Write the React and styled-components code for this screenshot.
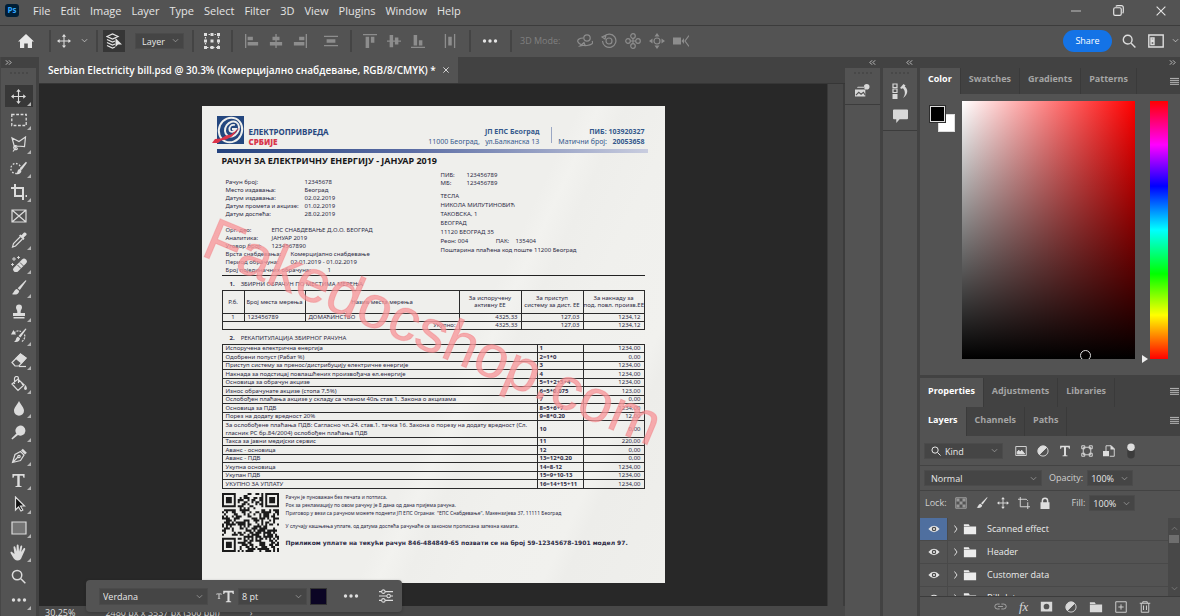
import React from "react";
import styled, { createGlobalStyle, css } from "styled-components";

const Global = createGlobalStyle`
  *, *::before, *::after { box-sizing: border-box; }
  html, body, #root { height: 100%; }
  body { margin: 0; overflow: hidden; background: #535353; color: #e4e4e4;
    font: 11px/16px "Open Sans", "Noto Sans", sans-serif; }
  button, input, select { font: inherit; color: inherit; border: 0; padding: 0; margin: 0; background: none; border-radius: 0; }
  select { appearance: none; }
  ul { list-style: none; margin: 0; padding: 0; }
  h1, h2, p, dl, dd, dt { margin: 0; font: inherit; }
  svg { display: block; flex: none; }
`;

const Shell = styled.div`
  display: flex; flex-direction: column; height: 100vh; min-height: 0;
`;
const MenuBar = styled.header`
  display: flex; align-items: center; height: 26px; flex: none; padding: 0 14px 4px 5px;
  border-bottom: 1px solid #3c3c3c;
`;
const Logo = styled.span`
  width: 14px; height: 13px; border-radius: 3px; background: #001e36; color: #31a8ff;
  font-size: 8px; line-height: 12px; font-weight: 700; text-align: center; margin-right: 14px;
`;
const Menus = styled.nav`display: flex; gap: 10px; flex: 1;`;
const WindowButtons = styled.div`display: flex; gap: 32px; align-items: center;`;
const Plain = styled.button`display: flex; align-items: center; justify-content: center; white-space: nowrap;`;

const OptionsBar = styled.div`
  display: flex; align-items: center; height: 31px; flex: none; padding: 0 1px 2px 18px;
`;
const Rule = styled.i`width: 2px; height: 22px; background: #444; flex: none; margin: 0 ${p => p.$r ?? 0}px 0 ${p => p.$l ?? 0}px;`;
const Group = styled.div`display: flex; align-items: center; gap: ${p => p.$gap}px; color: ${p => p.$dim ? "#8d8d8d" : "#dedede"};`;
const AutoSelect = styled(Plain)`width: 22px; height: 22px; background: #363636;`;
const ModeLabel = styled.span`font-size: 9px; color: #808080; margin: 0 17px 0 8px;`;
const Spacer = styled.div`flex: 1;`;
const Share = styled.button`
  width: 49px; height: 22px; border-radius: 11px; background: #1473e6; color: #fff; font-size: 9px; margin-right: 10px;
`;

const Field = styled.label`
  display: flex; align-items: center; position: relative; height: ${p => p.$h ?? 16}px; width: ${p => p.$w}px;
  background: #454545; border: 1px solid #4b4b4b; color: #e8e8e8; font-size: 9px; flex: none;
  padding-left: ${p => p.$pad ?? 6}px; gap: 4px;
  select, input { flex: 1; min-width: 0; width: 0; height: 100%; outline: 0; }
  > svg:last-child { margin-right: 4px; color: #aaa; pointer-events: none; }
`;

const Main = styled.div`display: flex; flex: 1; min-height: 0;`;
const ToolColumn = styled.aside`
  width: 39px; flex: none; border-right: 3px solid #424242; border-left: 1px solid #474747; display: flex; flex-direction: column;
`;
const Strip = styled.div`
  height: 11px; flex: none; background: #424242; display: flex; align-items: center; color: #d0d0d0;
  justify-content: ${p => p.$end ? "flex-end" : "flex-start"}; padding: 0 4px;
`;
const Grip = styled.i`height: 2px; width: 18px; margin: 4px auto 10px; border-top: 2px dotted #484848; flex: none;`;
const ToolList = styled.div`display: flex; flex-direction: column; align-items: center;`;
const Tool = styled.button`
  position: relative; width: 28px; height: 22px; margin: 1px 0; display: grid; place-items: center; color: #dcdcdc;
  background: ${p => p.$on ? "#383838" : "transparent"};
  ${p => p.$more && css`&::after { content: ""; position: absolute; right: 2px; bottom: 1px; border: 2px solid transparent; border-right-color: #b4b4b4; border-bottom-color: #b4b4b4; }`}
`;

const Workspace = styled.main`flex: 1; min-width: 0; display: flex; flex-direction: column; position: relative; background: #282828;`;
const DocTabs = styled.div`height: 27px; flex: none; background: #424242; display: flex; border-bottom: 1px solid #363636;`;
const DocTab = styled.div`
  display: flex; align-items: center; gap: 7px; background: #535353; padding: 0 9px; font-weight: 600; font-size: 10px; color: #fff; white-space: nowrap;
`;
const View = styled.div`flex: 1; min-height: 0; display: flex;`;
const Canvas = styled.div`flex: 1; overflow: hidden; display: flex; justify-content: center; align-items: flex-start; padding-top: 22px;`;
const VScroll = styled.div`width: 18px; background: #484848; border-left: 1px solid #393939; border-right: 2px solid #3c3c3c;`;
const Status = styled.footer`
  height: 10px; flex: none; overflow: hidden; background: #484848; padding-left: 6px; display: flex; gap: 30px; font-size: 9px; color: #dcdcdc; line-height: 14px; white-space: nowrap;
`;

const FloatBar = styled.div`
  position: absolute; left: 47px; bottom: 4px; width: 316px; height: 32px; border-radius: 4px; background: #535353;
  display: flex; align-items: center; padding: 0 10px 0 4px; box-shadow: 0 1px 3px #2226;
`;
const Handle = styled.i`width: 4px; height: 25px; border-radius: 2px; background: #cfcfcf; margin-right: 9px;`;
const Swatch = styled.button`width: 17px; height: 17px; background: #0b0524; border: 1px solid #333; margin: 0 16px 0 3px; flex: none;`;

/* Document page */
const Page = styled.article`
  position: relative; width: 463px; height: 477px; flex: none; overflow: hidden; color: #2c2a45;
  background: linear-gradient(115deg, #efefec 0 55%, #f2f2ef 58%, #eeeeeb 62%, #f0f0ed 70%, #f1f1ee 82%, #ededea 85%, #efefec 100%);
  font: 6px/8px "Noto Sans", sans-serif; padding: 9px 20px 0; white-space: nowrap;
`;
const PageHead = styled.header`display: flex; height: 34px; margin-left: -10px;`;
const Company = styled.div`
  color: #27477e; font: 700 8px/10px "Noto Sans", sans-serif; padding: 12px 0 0 3px; flex: 1;
  b { display: block; color: #d9364b; }
`;
const HeadText = styled.div`
  color: #35598c; font-size: 7px; line-height: 10px; text-align: right; padding-top: 12px;
  height: 30px;
`;
const HeadRule = styled.i`width: 1px; height: 16px; margin: 12px 6px 0 12px; background: #9aa7c4;`;
const Band = styled.i`display: block; height: 4px; margin: 0 -3px 0 -5px; background: linear-gradient(90deg, #24427e, #5a6ca4 45%, #c9cddf);`;
const Title = styled.h1`font: 700 9px/12px "Noto Sans", sans-serif; color: #17171a; margin-top: 2px;`;
const Columns = styled.div`display: flex; height: 109px; border-bottom: 1px solid #222;`;
const Left = styled.div`width: 219px; padding: 11px 0 0 4px;`;
const Right = styled.div`padding-top: 4px; flex: 1;`;
const Pairs = styled.dl`
  display: grid; grid-template-columns: ${p => p.$w}px auto; justify-content: start; margin-bottom: ${p => p.$mb ?? 0}px;
`;
const Address = styled.p`line-height: 9px; margin-top: 5px; span { display: inline-block; margin-left: 26px; }`;
const Section = styled.h2`margin-left: 8px; b { margin-right: 6px; } height: 8px; margin-top: 4px;`;
const Bill = styled.table`
  width: 422px; table-layout: fixed; border-collapse: collapse; margin-top: 2px; font-size: 6px; line-height: 7px;
  th, td { border: 1px solid #2b2b2b; padding: 0 3px; overflow: hidden; font-weight: 400; text-align: left; vertical-align: middle; }
  td:last-child, td.n { text-align: right; }
  thead th { height: 23px; text-align: center; padding: 0; }
  td.c { text-align: center; }
`;
const Recap = styled(Bill)`
  tbody tr:nth-child(odd) td { line-height: 7px; }
  tbody tr:nth-child(even) td { line-height: 8px; }
  td:nth-child(2) { font-weight: 700; padding-left: 2px; }
  td { padding-left: 3px; }
`;
const Foot = styled.div`display: flex; gap: 7px; margin-top: 4px; font-size: 5px;`;
const Notes = styled.div`
  p:nth-child(3) { margin-bottom: 5px; }
  p:nth-child(4) { margin-bottom: 9px; }
  p:last-child { font: 700 6px/8px "DejaVu Sans", sans-serif; }
`;
const Watermark = styled.div`
  position: absolute; left: 50%; top: 226px; transform: translate(-50%, -50%) rotate(23deg);
  font: 60px/60px "Liberation Sans", Arial, sans-serif; color: rgba(240, 60, 66, .42);
  -webkit-text-stroke: 1px rgba(236, 80, 84, .2);
  text-shadow: 0 0 2px rgba(255, 255, 255, .7); pointer-events: none;
`;

/* Side panels */
const Dock = styled.aside`width: ${p => p.$w}px; flex: none; border-right: 3px solid #424242; display: flex; flex-direction: column;`;
const DockGroup = styled.div`
  display: flex; flex-direction: column; align-items: center; gap: 9px; height: ${p => p.$h}px; border-bottom: 1px solid #3c3c3c; color: #d8d8d8;
  i { margin-bottom: 0; }
`;
const Panels = styled.aside`width: 260px; flex: none; display: flex; flex-direction: column; min-height: 0;`;
const Tabs = styled.div`
  display: flex; flex: none; height: ${p => p.$h ?? 26}px; background: #424242; align-items: stretch; padding-right: 1px;
  > svg { margin: 9px 0 0 auto; color: #c4c4c4; }
`;
const Tab = styled.button`
  font-size: 9px; font-weight: 700; padding: 0 8px 4px; border-right: 1px solid #3a3a3a; white-space: nowrap;
  color: ${p => p.$on ? "#fff" : "#a5a5a5"}; background: ${p => p.$on ? "#535353" : "transparent"};
`;
const ColorBody = styled.div`display: flex; height: 284px; flex: none; padding: 7px 12px 16px 9px; border-bottom: 3px solid #424242;`;
const Chips = styled.div`
  display: grid; width: 33px; grid-template: 9px 9px 9px / 9px 8px 9px; padding-top: 4px;
  i { border: 1px solid #2d2d2d; }
  i:first-child { grid-area: 2 / 2 / 4 / 4; background: #fff; border-color: #ddd; }
  i:last-child { grid-area: 1 / 1 / 3 / 3; background: #000; box-shadow: inset 0 0 0 1px #ddd; }
`;
const Spectrum = styled.div`
  flex: 1; background: linear-gradient(0deg, #000, transparent), linear-gradient(90deg, #fff, #f00); position: relative; overflow: hidden;
  &::after { content: ""; position: absolute; left: 118px; bottom: -2px; width: 11px; height: 11px; border: 1px solid #ddd; border-radius: 50%; }
`;
const Hue = styled.div`
  width: 18px; margin-left: 15px; position: relative;
  background: linear-gradient(#f00, #f0f 17%, #00f 33%, #0ff 50%, #0f0 67%, #ff0 83%, #f00);
  &::before { content: ""; position: absolute; left: -8px; bottom: -4px; border: 4px solid transparent; border-left: 6px solid #eee; border-right: 0; }
`;
const Row = styled.div`
  display: flex; align-items: center; flex: none; height: ${p => p.$h}px; padding: 0 5px ${p => p.$pb ?? 0}px 4px; font-size: 9px; color: #d0d0d0;
  border-bottom: ${p => p.$line ? "1px solid #434343" : "0"}; white-space: nowrap;
`;
const Text = styled.span`margin: 0 ${p => p.$r ?? 4}px 0 ${p => p.$l ?? 0}px;`;
const Layers = styled.div`display: flex; flex: 1; min-height: 0; overflow: hidden; border-bottom: 1px solid #3c3c3c;`;
const LayerList = styled.ul`flex: 1;`;
const LayerRow = styled.li`
  display: flex; align-items: center; height: 23px; border-bottom: 1px solid #494949; font-size: 9px; color: #ececec;
`;
const Eye = styled.button`
  width: 28px; height: 100%; display: grid; place-items: center; border-right: 1px solid #494949; background: ${p => p.$on ? "#4f6f9f" : "transparent"};
`;
const LayerScroll = styled.div`
  width: 12px; background: #484848; display: flex; flex-direction: column; align-items: center; color: #888; padding: 7px 0 4px;
  i { width: 10px; height: 8px; background: #6e6e6e; margin: 3px 0 auto; }
`;
const PanelFoot = styled.footer`height: 19px; flex: none; display: flex; align-items: center; padding-left: 74px; gap: 12px; color: #d8d8d8;`;
const Fx = styled.i`font: italic 13px/14px "Liberation Serif", serif;`;

/* Icons: 16-unit drawings */
const I = ({ s = 16, w = 16, h = 16, sw = 1.2, fill = "none", children }) => (
  <svg width={s * w / 16} height={s * h / 16} viewBox={`0 0 ${w} ${h}`} fill={fill} stroke={fill === "none" ? "currentColor" : "none"} strokeWidth={sw} aria-hidden="true">{children}</svg>
);
const Move = ({ s = 15 }) => <I s={s}><path d="M8 1.5v13M1.5 8h13" /><path d="M8 0l2.4 3H5.6zM8 16l2.4-3H5.6zM0 8l3-2.4v4.8zM16 8l-3-2.4v4.8z" fill="currentColor" stroke="none" /></I>;
const Chev = ({ up }) => <I s={7} sw={1.6}><path d={up ? "M2 11l6-6 6 6" : "M2 5l6 6 6-6"} /></I>;
const Dots = () => <I fill="currentColor"><circle cx="2.5" cy="8" r="1.7" /><circle cx="8" cy="8" r="1.7" /><circle cx="13.5" cy="8" r="1.7" /></I>;
const Burger = () => <I s={9} sw={1.6}><path d="M0 2.5h16M0 6h16M0 9.5h16M0 13h16" /></I>;
const Double = ({ left }) => <I s={7} sw={2}><path d={left ? "M7 3L2 8l5 5M14 3L9 8l5 5" : "M2 3l5 5-5 5M9 3l5 5-5 5"} /></I>;
const Search = ({ s = 14 }) => <I s={s} sw={1.6}><circle cx="6.5" cy="6.5" r="5" /><path d="M10.5 10.5l4.8 4.8" /></I>;
const Folder = () => <I s={14} fill="currentColor"><path d="M1 2.5h5.5l1.2 2H1zM1 5h14v9H1z" /></I>;
const EyeIcon = () => <I s={12}><path d="M.5 8Q8-.5 15.5 8 8 16.5.5 8z" fill="#e6e6e6" stroke="none" /><circle cx="8" cy="8" r="3" fill="#4a4a4a" stroke="none" /><circle cx="8" cy="8" r="1.3" fill="#eee" stroke="none" /></I>;
const Half = () => <I s={12}><circle cx="8" cy="8" r="6.8" /><path d="M12.8 3.2A6.8 6.8 0 0 0 3.200 12.800z" fill="currentColor" /></I>;
const TypeT = ({ s = 13 }) => <I s={s} fill="currentColor"><path d="M1.5 1h13v4h-1.200l-.8-2H9.300v10.500l2 .5v1H4.700v-1l2-.5V3H3.500l-.8 2H1.500z" /></I>;
const Brush = ({ s = 16 }) => <I s={s} fill="currentColor"><path d="M15.500.8L8.800 10 6.700 8.200 14.600.2zM6 9l2.200 1.900C8 14.200 4 15.500.8 14 3 13.500 2.800 9.500 6 9z" /></I>;
const Align = ({ d }) => <I s={14} fill="currentColor"><path d={d} /></I>;

const tools = [
  ["Move", <Move />],
  ["Rectangular marquee", <I sw={1.3}><path d="M.8 2.500h14.400v11H.8z" strokeDasharray="2.800 1.600" /></I>],
  ["Polygonal lasso", <I><path d="M3.500 11L1 2l7 3.500L14.500 1l-1 9.500L6 10zM6 10a2 2 0 1 0-1 3.500c2 .5 1.500-2 0-2L2 15.500" /></I>],
  ["Quick selection", <I s={17}><circle cx="5.500" cy="8" r="4.700" strokeDasharray="1.600 1.500" /><path d="M16 2.500l-5 6.800-1.700-1.500L15 1.700zM9 8.500l1.800 1.700C10.500 13 8 14 5.500 13.200 7.500 12.500 6.500 9 9 8.500z" fill="currentColor" stroke="none" /></I>],
  ["Crop", <I sw={2}><path d="M4 0v12h9M0 4h12v12M14.500 12H16" /></I>],
  ["Frame", <I><path d="M1 2h14v12H1zM1 2l14 12M15 2L1 14" /></I>],
  ["Eyedropper", <I><path d="M9.500 4.500l-7 7L1.500 15l3-1 7-7" /><path d="M8 3.500l1.500-1 1 .8 2.300-2.500c1.500-1.300 3.800 1 2.400 2.500l-2.500 2.300.8 1-1 1.400z" fill="currentColor" stroke="none" /></I>],
  ["Spot healing brush", <I><path d="M5 13.500L13 5.500" strokeWidth="5.500" strokeLinecap="round" /><path d="M6.500 9l3.500 3.500M9 6.500l3.500 3.500" stroke="#535353" strokeWidth=".9" /><path d="M3 1v4M1 3h4M7.500 0v3M6 1.500h3M1.500 7v3M0 8.500h3" strokeWidth=".9" /></I>],
  ["Brush", <Brush />],
  ["Clone stamp", <I fill="currentColor"><path d="M5 3.500a3 3 0 0 1 6 0c0 1.800-1.600 2.300-1.300 5.500H14v3H2V9h4.300C6.600 5.800 5 5.300 5 3.500zM2.500 13h11v1.600h-11z" /></I>],
  ["History brush", <I><path d="M15.500 1l-6 8.500-2-1.500L14.500.5zM7 8.700l2 1.600c0 3-3 4.400-6 3.400 2.500-.8 1.500-4.500 4-5z" fill="currentColor" stroke="none" /><path d="M3 5c2-2.500 5-2.500 7-1.500M13.500 6.500c1 3-.5 6-3.500 7.500" strokeDasharray="2 1" /><path d="M0 6.500L2.500 2l2.500 4.500z" fill="currentColor" stroke="none" /></I>],
  ["Eraser", <I><path d="M1 10.500L9.500 2 15 6l-7 8H4z" /><path d="M5 6.500L9.500 2 15 6l-4.500 5z" fill="currentColor" /><path d="M8 14.500h7" /></I>],
  ["Paint bucket", <I><path d="M1 8l6-5 6 6-6 5.500zM3.500 8V2.500a2 2 0 0 1 4 0V7" /><path d="M14.500 9c2 3 1.800 5 0 5s-2-2 0-5zM10 5.500l4 3.500H11z" fill="currentColor" stroke="none" /></I>],
  ["Blur", <I fill="currentColor"><path d="M8 1c2 4 5 6.500 5 9.700a5 5 0 0 1-10 0C3 7.500 6 5 8 1z" /></I>],
  ["Dodge", <I fill="currentColor"><path d="M1.300 15.500l-.9-.9 5-5A5 5 0 1 1 7 11z" /></I>],
  ["Pen", <I><path d="M1.500 14.500L4 6.500l5.500-3L13 7l-3.500 5.500zM1.500 14.500L7 9" /><path d="M10 2.500L11.800.8l4 4L14 6.500z" fill="currentColor" stroke="none" /><circle cx="8" cy="8.500" r="1.200" /></I>],
  ["Type", <TypeT s={15} />],
  ["Path selection", <I><path d="M4.500 1v13l3-3 2.500 4 1.800-1-2.300-4h4z" fill="#111" /></I>],
  ["Rectangle", <I><path d="M1 2h14v12H1z" fill="#757575" /></I>],
  ["Hand", <I s={17} fill="currentColor"><path d="M4.200 9.500L3.300 3c0-1.300 1.500-1.300 1.800 0l1 4L6.300 1.500c.1-1.300 1.700-1.200 1.800 0L8.500 7l1.300-5c.4-1.100 1.900-.8 1.700.4l-1 5.200 2.200-3.300c.8-1 2.100-.2 1.500 1l-3 6.700c-.6 2-1.700 3.500-4.200 3.500-2 0-3.300-1.200-4.200-3L.5 8.500C.2 7.400 1.500 7 2.200 7.800z" /></I>],
  ["Zoom", <Search s={15} />],
  ["More tools", <Dots />],
];

const alignIcons = [
  "M0 0h1.500v16H0zM3 3h6v4H3zM3 9h12v4H3z",
  "M7.300 0h1.500v16H7.300zM4 3h8v4H4zM1 9h14v4H1z",
  "M14.500 0H16v16h-1.500zM7 3h6v4H7zM1 9h12v4H1z",
];
const alignIcons2 = [
  "M0 0h16v1.500H0zM3 3h4v13H3zM9 3h4v7H9z",
  "M0 7.300h16v1.500H0zM3 1h4v14H3zM9 4h4v8H9z",
  "M0 14.500h16V16H0zM3 1h4v12H3zM9 7h4v6H9z",
];

const recap = [
  ["Испоручена електрична енергија", "1", "1234,00"],
  ["Одобрени попуст (Рабат  %)", "2=1*0", "0,00"],
  ["Приступ систему за пренос/дистрибуцију електричне енергије", "3", "1234,00"],
  ["Накнада за подстицај повлашћених произвођача ел.енергије", "4", "1234,00"],
  ["Основица за обрачун акцизе", "5=1+2+3+4", "1234,00"],
  ["Износ обрачунате акцизе (стопа 7,5%)", "6=5*0.075", "123,00"],
  ["Ослобођен плаћања акцизе у складу са чланом 40љ став 1. Закона о акцизама", "7", "0,00"],
  ["Основица за ПДВ", "8=5+6+7", "1234,00"],
  ["Порез на додату вредност 20%", "9=8*0.20", "12,00"],
  [<>За ослобођене плаћања ПДВ: Сагласно чл.24. став.1. тачка 16. Закона о порезу на додату вредност (Сл.<br />гласник РС бр.84/2004) ослобођен плаћања ПДВ</>, "10", "0,00"],
  ["Такса за јавни медијски сервис", "11", "220,00"],
  ["Аванс - основица", "12", "0,00"],
  ["Аванс - ПДВ", "13=12*0.20", "0,00"],
  ["Укупна основица", "14=8-12", "1234,00"],
  ["Укупан ПДВ", "15=9+10-13", "1234,00"],
  ["УКУПНО ЗА УПЛАТУ", "16=14+15+11", "1234,00"],
];

/* Decorative code block: three corner marks and a scattered fill */
function CodeBlock() {
  const n = 29;
  const cells = [];
  const inCorner = (x, y) => (x < 8 && y < 8) || (x > n - 9 && y < 8) || (x < 8 && y > n - 9);
  let seed = 77;
  for (let y = 0; y < n; y++) for (let x = 0; x < n; x++) {
    seed = (seed * 1103515245 + 12345) % 2147483648;
    if (!inCorner(x, y) && (seed >> 12) % 100 < 52) cells.push(`M${x} ${y}h1v1h-1z`);
  }
  const mark = (x, y) => `M${x} ${y}h7v7h-7zM${x + 1} ${y + 1}v5h5v-5zM${x + 2} ${y + 2}h3v3h-3z`;
  return (
    <svg width="57" height="59" viewBox="0 0 29 29" preserveAspectRatio="none" fill="#1b1b1b" aria-hidden="true">
      <path d={cells.join("")} />
      <path fillRule="evenodd" d={mark(0, 0) + mark(22, 0) + mark(0, 22)} />
    </svg>
  );
}

function CompanyLogo() {
  return (
    <svg width="34" height="32" viewBox="0 0 34 32" aria-hidden="true">
      <rect x="5" y="1" width="27" height="28" fill="#24477f" />
      <ellipse cx="18.500" cy="15" rx="11.500" ry="12.500" fill="none" stroke="#efefec" strokeWidth="2" transform="rotate(25 18.500 15)" />
      <ellipse cx="20" cy="14" rx="6.500" ry="8" fill="none" stroke="#efefec" strokeWidth="2" transform="rotate(35 20 14)" />
      <path d="M23 10c-4-1-6 2-5.500 5s5 2 6.500-1h-4" fill="none" stroke="#efefec" strokeWidth="1.800" />
      <path d="M0 28l3-4 6-.5 5-3 5-1 9-7-8 9-6 3-5 1-3 2.500z" fill="#dc3348" />
    </svg>
  );
}

function BillPage() {
  return (
    <Page>
      <PageHead>
        <CompanyLogo />
        <Company>ЕЛЕКТРОПРИВРЕДА<b>СРБИЈЕ</b></Company>
        <HeadText><b>ЈП ЕПС Београд</b><br />11000 Београд,&nbsp;&nbsp; ул.Балканска 13</HeadText>
        <HeadRule />
        <HeadText><b>ПИБ: 103920327</b><br />Матични број:&nbsp;&nbsp; <b>20053658</b></HeadText>
      </PageHead>
      <Band />
      <Title>РАЧУН ЗА ЕЛЕКТРИЧНУ ЕНЕРГИЈУ - ЈАНУАР 2019</Title>
      <Columns>
        <Left>
          <Pairs $w={79} $mb={8}>
            <dt>Рачун број:</dt><dd>12345678</dd>
            <dt>Место издавања:</dt><dd>Београд</dd>
            <dt>Датум издавања:</dt><dd>02.02.2019</dd>
            <dt>Датум промета и акцизе:</dt><dd>01.02.2019</dd>
            <dt>Датум доспећа:</dt><dd>28.02.2019</dd>
          </Pairs>
          <Pairs $w={46}>
            <dt>Орг. део:</dt><dd>ЕПС СНАБДЕВАЊЕ Д.О.О. БЕОГРАД</dd>
            <dt>Аналитика:</dt><dd>ЈАНУАР 2019</dd>
            <dt>Уговор број:</dt><dd>1234567890</dd>
          </Pairs>
          <Pairs $w={65}>
            <dt>Врста снабдевања:</dt><dd>Комерцијално снабдевање</dd>
            <dt>Период обрачуна:</dt><dd>02.01.2019 - 01.02.2019</dd>
          </Pairs>
          <Pairs $w={102}>
            <dt>Број појединачних обрачуна:</dt><dd>1</dd>
          </Pairs>
        </Left>
        <Right>
          <Pairs $w={26}>
            <dt>ПИБ:</dt><dd>123456789</dd>
            <dt>МБ:</dt><dd>123456789</dd>
          </Pairs>
          <Address>
            ТЕСЛА<br />НИКОЛА МИЛУТИНОВИЋ<br />ТАКОВСКА, 1<br />БЕОГРАД<br />11120 БЕОГРАД 35<br />
            Реон: 004 <span>ПАК:&nbsp;&nbsp;&nbsp; 135404</span><br />Поштарина плаћена код поште 11200 Београд
          </Address>
        </Right>
      </Columns>
      <Section><b>1.</b>ЗБИРНИ ОБРАЧУН ПО МЕСТИМА МЕРЕЊА</Section>
      <Bill>
        <colgroup><col width="22" /><col width="61" /><col width="154" /><col width="62" /><col width="62" /><col width="61" /></colgroup>
        <thead>
          <tr><th>Р.б.</th><th>Број места мерења</th><th>Назив места мерења</th><th>За испоручену<br />активну ЕЕ</th><th>За приступ<br />систему за дист. ЕЕ</th><th>За накнаду за<br />под. повл. произв.ЕЕ</th></tr>
        </thead>
        <tbody>
          <tr><td className="c">1</td><td>123456789</td><td>ДОМАЋИНСТВО</td><td className="n">4325,33</td><td className="n">127,03</td><td>1234,12</td></tr>
          <tr><td className="n" colSpan={3}>Укупно:</td><td className="n">4325,33</td><td className="n">127,03</td><td>1234,12</td></tr>
        </tbody>
      </Bill>
      <Section><b>2.</b>РЕКАПИТУЛАЦИЈА ЗБИРНОГ РАЧУНА</Section>
      <Recap>
        <colgroup><col width="315" /><col width="46" /><col width="61" /></colgroup>
        <tbody>{recap.map(([a, b, c]) => <tr key={b}><td>{a}</td><td>{b}</td><td>{c}</td></tr>)}</tbody>
      </Recap>
      <Foot>
        <CodeBlock />
        <Notes>
          <p>Рачун је пуноважан без печата и потписа.</p>
          <p>Рок за рекламацију по овом рачуну је 8 дана од дана пријема рачуна.</p>
          <p>Приговор у вези са рачуном можете поднети ЈП ЕПС Огранак&nbsp; "ЕПС Снабдевање", Макензијева 37, 11111 Београд</p>
          <p>У случају кашњења уплате, од датума доспећа рачунаће се законом прописана затезна камата.</p>
          <p>Приликом уплате на текући рачун 846-484849-65 позвати се на број 59-12345678-1901 модел 97.</p>
        </Notes>
      </Foot>
      <Watermark>Fakedocshop.com</Watermark>
    </Page>
  );
}

const menus = ["File", "Edit", "Image", "Layer", "Type", "Select", "Filter", "3D", "View", "Plugins", "Window", "Help"];

function PanelTabs({ names, h }) {
  return <Tabs $h={h} role="tablist">{names.map((n, i) => <Tab key={n} role="tab" aria-selected={i === 0} $on={i === 0}>{n}</Tab>)}<Burger /></Tabs>;
}

export default function App() {
  return (
    <Shell>
      <Global />
      <MenuBar>
        <Logo>Ps</Logo>
        <Menus>{menus.map(m => <Plain key={m}>{m}</Plain>)}</Menus>
        <WindowButtons>
          <Plain aria-label="Minimize"><I s={10}><path d="M0 8h16" /></I></Plain>
          <Plain aria-label="Restore"><I s={11} sw={1.7}><rect x="1" y="4" width="11" height="11" rx="2" /><path d="M4 2q1-1 3-1h5q3 0 3 3v5q0 2-1 3" /></I></Plain>
          <Plain aria-label="Close"><I s={10} sw={1.8}><path d="M1 1l14 14M15 1L1 15" /></I></Plain>
        </WindowButtons>
      </MenuBar>
      <OptionsBar>
        <Plain aria-label="Home"><I s={16} fill="#e8e8e8"><path d="M8 1l8 7.500h-2V15H9.800v-4.500H6.200V15H2V8.500H0z" /></I></Plain>
        <Rule $l={15} $r={6} />
        <Group $gap={10}><Move s={14} /><Chev /></Group>
        <Rule $l={8} $r={5} />
        <AutoSelect aria-label="Auto-select"><I s={16}><path d="M1 3.500L6.500 1 12 3.500 6.500 6zM1 6.500L6.500 9 9 8M1 9.500L6.500 12 9 11M1 12.500L6.500 15 9 14" /><path d="M9.500 5v9l2.500-2.500h4z" fill="currentColor" stroke="none" /></I></AutoSelect>
        <Text $l={10} $r={0} />
        <Field $w={49}><select aria-label="Auto-select target" defaultValue="Layer"><option>Layer</option></select><Chev /></Field>
        <Rule $l={8} $r={10} />
        <Group $gap={0}><I s={16}><path d="M1.500 1.500h13v13h-13z" strokeDasharray="1.500 1.500" /><path d="M0 0h3v3H0zM6.500 0h3v3h-3zM13 0h3v3h-3zM0 6.500h3v3H0zM6.500 6.500h3v3h-3zM13 6.500h3v3h-3zM0 13h3v3H0zM6.500 13h3v3h-3zM13 13h3v3h-3z" fill="currentColor" stroke="none" /></I></Group>
        <Rule $l={11} $r={12} />
        <Group $dim $gap={10}>{alignIcons.map(d => <Align key={d} d={d} />)}</Group>
        <Text $l={17} $r={0} />
        <Group $dim $gap={0}><Align d="M0 2h16v1.500H0zM3 6h10v4H3zM0 12.500h16V14H0z" /></Group>
        <Rule $l={12} $r={11} />
        <Group $dim $gap={10}>{alignIcons2.map(d => <Align key={d} d={d} />)}</Group>
        <Text $l={18} $r={0} />
        <Group $dim $gap={0}><Align d="M2 0h1.500v16H2zM6 3h4v10H6zM12.500 0H14v16h-1.500z" /></Group>
        <Rule $l={12} $r={11} />
        <Plain aria-label="More options"><Dots /></Plain>
        <Rule $l={12} />
        <ModeLabel>3D Mode:</ModeLabel>
        <Group $dim $gap={8}>
          <I><circle cx="10" cy="5" r="3.200" /><path d="M6.500 5C2 5 0 7 1 9s5 4 9 3.500 7-2 5-4.500M3 13l5-1-1-2.500z" /></I>
          <I><circle cx="8" cy="8" r="3" /><path d="M3 3.500A6.700 6.700 0 1 1 1.500 8M1 4l4-2-1 4z" /></I>
          <I><circle cx="8" cy="3" r="2.300" /><circle cx="3" cy="8" r="2.300" /><circle cx="13" cy="8" r="2.300" /><circle cx="8" cy="13" r="2.300" /><path d="M8 5v6M5 8h6" /></I>
          <I><circle cx="8" cy="8" r="3" /><path d="M8 0l2.500 3.500h-5zM8 16l2.500-3.500h-5zM0 8l3.500-2.500v5zM16 8l-3.500-2.500v5z" fill="currentColor" stroke="none" /></I>
          <I><path d="M0 4.500h8v7H0zM8.500 8L11 5v6z" fill="currentColor" stroke="none" /><path d="M16 2.500l-4 5.500 4 5.500" /></I>
        </Group>
        <Spacer />
        <Share>Share</Share>
        <Group $gap={8}>
          <Group $gap={12}><Search /><I s={16} sw={1.4}><path d="M.8 2h14.400v12H.8zM3 5h3v2H3zM3 8.500h3v3H3z" /></I></Group>
          <Chev />
        </Group>
      </OptionsBar>

      <Main>
        <ToolColumn>
          <Strip><Double /></Strip>
          <Grip />
          <ToolList>
            {tools.map(([n, icon], i) => <Tool key={n} aria-label={n} $on={i === 0} $more={n !== "Frame" && n !== "Zoom"}>{icon}</Tool>)}
          </ToolList>
        </ToolColumn>

        <Workspace>
          <DocTabs>
            <DocTab>Serbian Electricity bill.psd @ 30.3% (Комерцијално снабдевање, RGB/8/CMYK) *<Plain aria-label="Close document"><I s={6} sw={2}><path d="M1 1l14 14M15 1L1 15" /></I></Plain></DocTab>
          </DocTabs>
          <View>
            <Canvas><BillPage /></Canvas>
            <VScroll />
          </View>
          <Status><span>30.25%</span><span>2480 px x 3537 px (300 ppi)</span><span>›</span></Status>
          <FloatBar>
            <Handle />
            <Field $w={109} $pad={3} $h={17}><select aria-label="Font" defaultValue="Verdana"><option>Verdana</option></select><Chev /></Field>
            <Group $gap={0}><Text $l={8} $r={0} /><TypeT s={6} /><TypeT s={13} /></Group>
            <Text $r={3} />
            <Field $w={69} $pad={3} $h={17}><select aria-label="Font size" defaultValue="8 pt"><option>8 pt</option></select><Chev /></Field>
            <Swatch aria-label="Text color" />
            <Group $gap={20}><Dots /><I s={14}><path d="M0 3h3M7 3h9M0 8h9M13 8h3M0 13h3M7 13h9" /><circle cx="5" cy="3" r="2" /><circle cx="11" cy="8" r="2" /><circle cx="5" cy="13" r="2" /></I></Group>
          </FloatBar>
        </Workspace>

        <Dock $w={38}>
          <Strip $end><Double left /></Strip>
          <DockGroup $h={37}><Grip /><I s={15} fill="currentColor"><path d="M0 7h11v7.500H0zM2 5h8V4H3zM12.500 1a3 3 0 1 1 0 6 3 3 0 0 1 0-6z" /><path d="M1 13l3-3 2.500 2L9 10l2 3" stroke="#535353" fill="none" /></I></DockGroup>
        </Dock>
        <Dock $w={37}>
          <Strip $end><Double left /></Strip>
          <DockGroup $h={63}>
            <Grip />
            <I s={16}><path d="M1 1h4v3.500H1zM1 6h4v3.500H1z" /><path d="M.5 11h5v5h-5zM8 5l3.500-4 2 1.500-.8.9c3.800 3 3.500 8-1.700 11.600 2.500-3.500 2.500-7-.2-9.900L10 6z" fill="currentColor" stroke="none" /></I>
            <I s={15} fill="currentColor"><path d="M1 1.500h14q1 0 1 1V11q0 1-1 1H7l-3.500 4v-4H1q-1 0-1-1V2.500q0-1 1-1z" /></I>
          </DockGroup>
        </Dock>

        <Panels>
          <Strip $end><Double /></Strip>
          <PanelTabs names={["Color", "Swatches", "Gradients", "Patterns"]} />
          <ColorBody><Chips><i /><i /></Chips><Spectrum /><Hue /></ColorBody>
          <PanelTabs names={["Properties", "Adjustments", "Libraries"]} h={29} />
          <PanelTabs names={["Layers", "Channels", "Paths"]} h={29} />
          <Row $h={30} $line>
            <Field $w={79}><Search s={10} /><select aria-label="Filter kind" defaultValue="Kind"><option>Kind</option></select><Chev /></Field>
            <Text $l={8} />
            <Group $gap={10}>
              <I s={12}><path d="M1 2h14v12H1z" /><path d="M3 12V9l2-2 2 2 2-2 4 5z" fill="currentColor" /></I>
              <Half /><TypeT s={12} />
              <I s={12}><path d="M3 3h10v10H3z" /><path d="M1 1h4v4H1zM11 1h4v4h-4zM1 11h4v4H1zM11 11h4v4h-4z" /></I>
              <I s={12}><path d="M4 8V1h7l4 4v10H9" /><path d="M0 8h8v7H0zM10 0v6h6z" fill="currentColor" stroke="none" /></I>
              <I s={12} h={24} fill="currentColor"><rect x="3" y="4" width="10" height="18" rx="5" fill="#3c3c3c" /><circle cx="8" cy="7" r="5" /></I>
            </Group>
          </Row>
          <Row $h={25} $line>
            <Field $w={118}><select aria-label="Blend mode" defaultValue="Normal"><option>Normal</option></select><Chev /></Field>
            <Text as="label" htmlFor="opacity" $l={7}>Opacity:</Text>
            <Field $w={46} $pad={3}><input id="opacity" defaultValue="100%" /><Chev /></Field>
          </Row>
          <Row $h={27} $pb={3}>
            <Text $l={1} $r={8}>Lock:</Text>
            <Group $gap={9}>
              <I s={12}><path d="M1 1h14v14H1z" opacity=".6" /><path d="M2 2h4v4H2zM10 2h4v4h-4zM6 6h4v4H6zM2 10h4v4H2zM10 10h4v4h-4z" fill="#999" stroke="none" /></I>
              <Brush s={12} /><Move s={12} />
              <I s={12}><path d="M3 0v13h10V7M0 3h11l2 2M16 13h-3v3" /></I>
              <I s={12} fill="currentColor"><path d="M2 7h1.500V5a4.500 4.500 0 0 1 9 0v2H14v9H2zM5.500 7h5V5a2.500 2.500 0 0 0-5 0z" /></I>
            </Group>
            <Text as="label" htmlFor="fill" $l={21}>Fill:</Text>
            <Field $w={46} $pad={3}><input id="fill" defaultValue="100%" /><Chev /></Field>
          </Row>
          <Layers>
            <LayerList>
              {["Scanned effect", "Header", "Customer data", "Bill data"].map((n, i) => (
                <LayerRow key={n}>
                  <Eye $on={i === 0} aria-label={"Toggle " + n}><EyeIcon /></Eye>
                  <Text $l={4} $r={3}><I s={8} sw={1.8}><path d="M5 1l5 7-5 7" /></I></Text><Folder /><Text $l={10}>{n}</Text>
                </LayerRow>
              ))}
            </LayerList>
            <LayerScroll><Chev up /><i /><Chev /></LayerScroll>
          </Layers>
          <PanelFoot>
            <I s={13}><path d="M7 5H4a3 3 0 0 0 0 6h3M9 5h3a3 3 0 0 1 0 6H9M5 8h6" opacity=".6" /></I>
            <Fx>fx</Fx>
            <I s={13} fill="currentColor"><path fillRule="evenodd" d="M1 2h14v12H1zM8 4.500a3.500 3.500 0 1 0 0 7 3.500 3.500 0 0 0 0-7z" /></I>
            <Half /><Folder />
            <I s={12}><path d="M1 1h14v14H1zM8 4.500v7M4.500 8h7" /></I>
            <I s={12}><path d="M1 3h14M5 3V1h6v2M3 3v12h10V3M6 6v6M10 6v6" /></I>
          </PanelFoot>
        </Panels>
      </Main>
    </Shell>
  );
}
